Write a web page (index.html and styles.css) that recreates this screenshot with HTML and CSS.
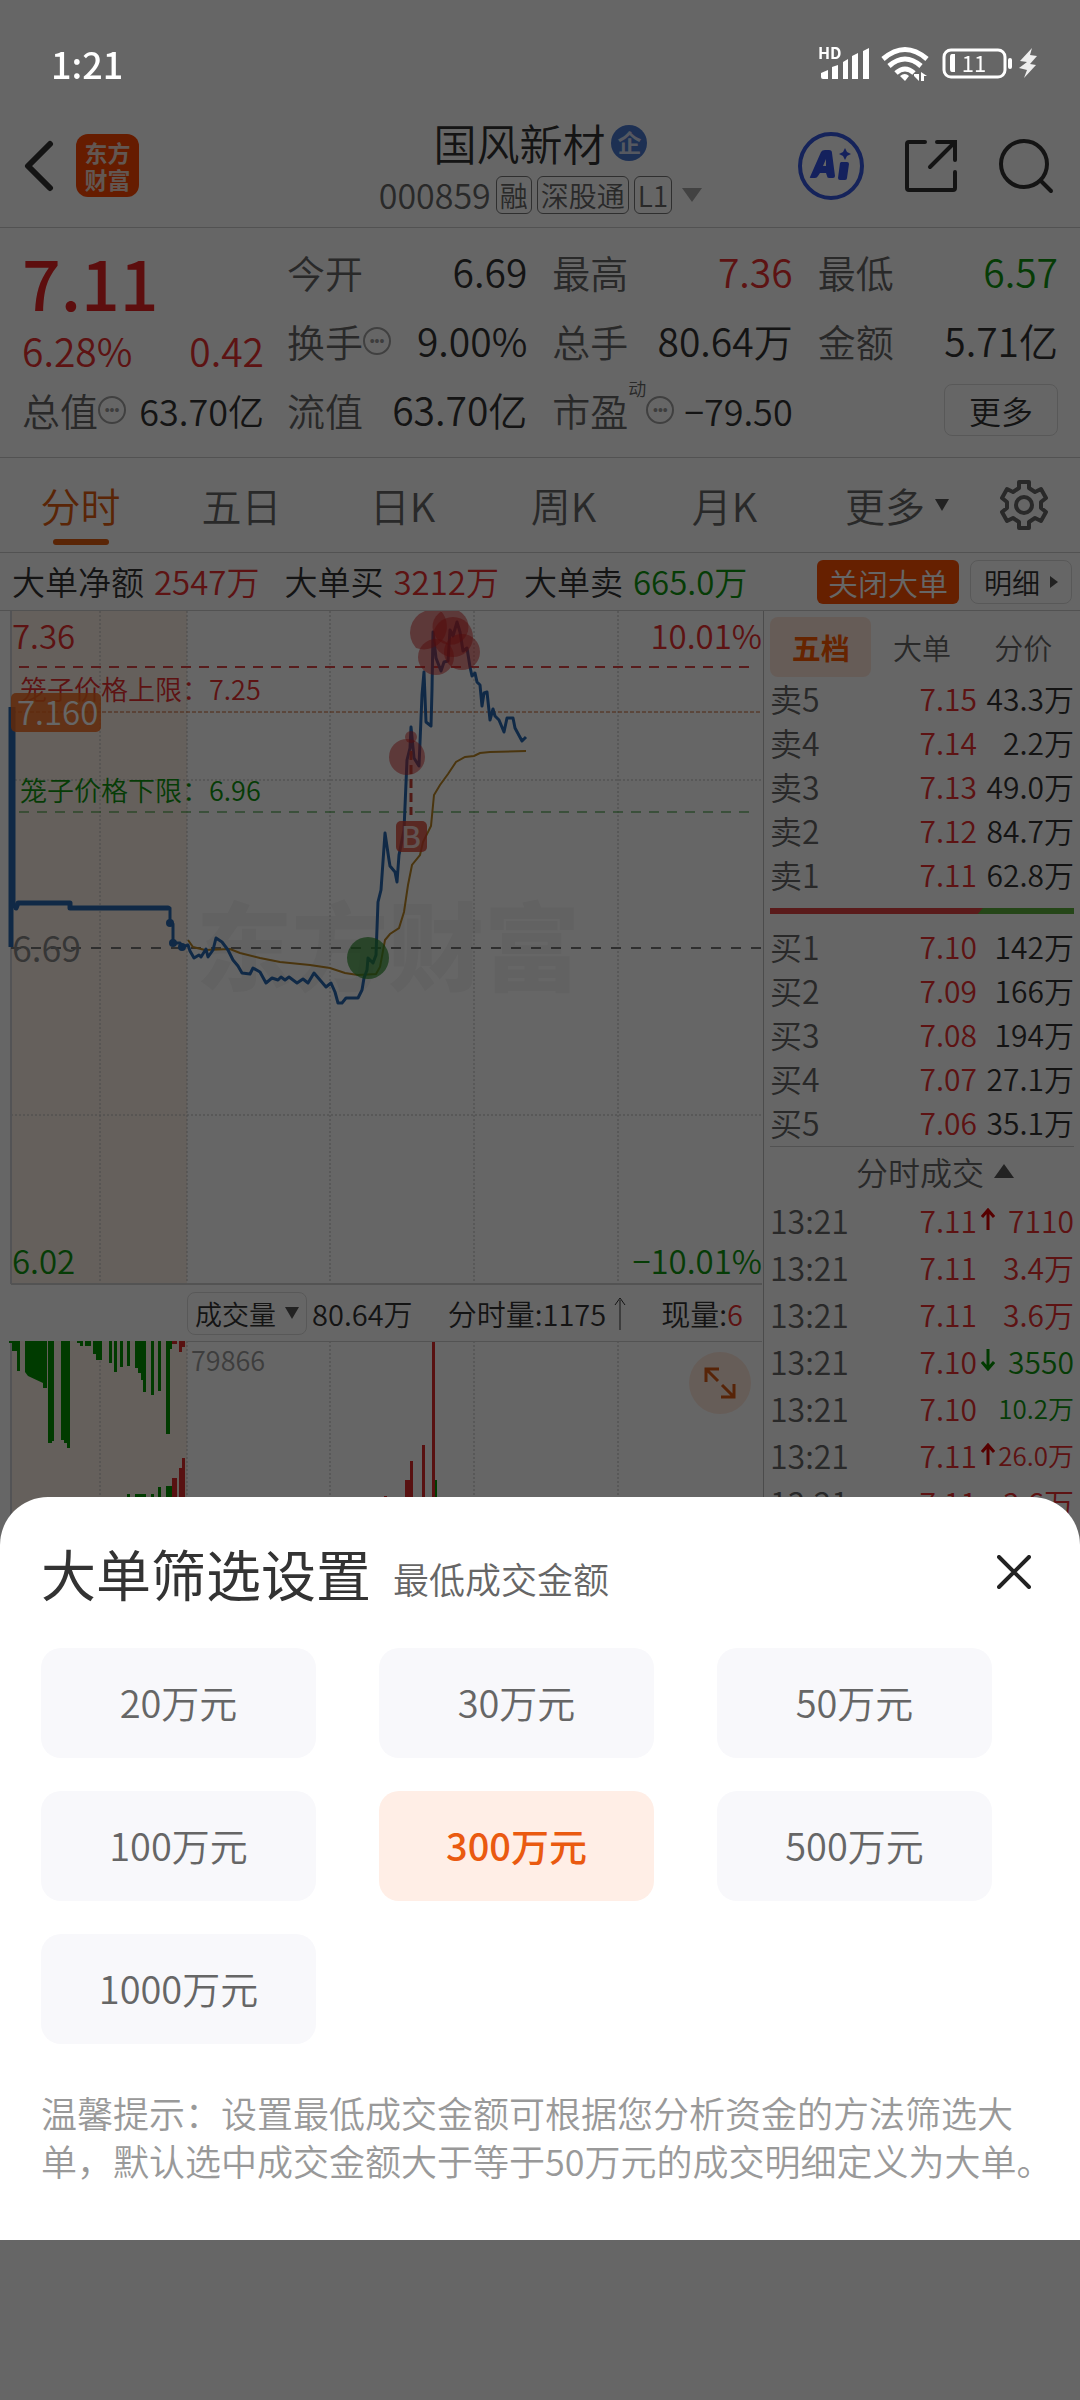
FILE: index.html
```html
<!DOCTYPE html>
<html lang="zh-CN">
  <head>
    <meta charset="utf-8">
    <meta name="viewport" content="width=device-width, initial-scale=1">
    <title>国风新材 000859</title>
    <link rel="stylesheet" href="styles.css">
  </head>
  <body>
    <div class="page">
      <header class="header">
        <div class="header-left">
          <button class="icon-btn" aria-label="返回">
            <svg width="32" height="52" viewBox="0 0 32 52"><path d="M28 4 L6 26 L28 48" class="ink" stroke-width="6" stroke-linecap="round" stroke-linejoin="round"/></svg>
          </button>
          <div class="logo"><span>东方</span><span>财富</span></div>
        </div>
        <div class="header-mid">
          <h1 class="stock-name">国风新材 <span class="badge">企</span></h1>
          <div class="stock-code">
            <span class="code">000859</span>
            <span class="tag">融</span>
            <span class="tag">深股通</span>
            <span class="tag">L1</span>
            <svg class="code-arrow" width="20" height="14" viewBox="0 0 20 14"><path d="M0 0 H20 L10 14Z" fill="#a6a6a6"/></svg>
          </div>
        </div>
        <div class="header-right">
          <button class="icon-btn" aria-label="AI">
            <svg width="66" height="68" viewBox="0 0 66 68">
              <ellipse cx="33" cy="34" rx="31" ry="32" fill="none" stroke="#3558e0" stroke-width="4"/>
              <path d="M12 45 L23 20 Q24 18 27 18 H31 Q34 18 34 21 L37 44 Q37 46 35 46 H31 Q29 46 29 44 L28 41 H22 L20 44 Q19 46 17 46 H13 Q11 46 12 45Z M25 34 H28 L28 27Z" fill="#3454e8" fill-rule="evenodd"/>
              <path d="M43 30 H49 Q51 30 51 32 L49 46 Q49 48 47 48 H42 Q40 48 40 46 L42 31Z M47 16 L49 20 L53 22 L49 24 L47 28 L45 24 L41 22 L45 20Z" fill="#3454e8"/>
            </svg>
          </button>
          <button class="icon-btn" aria-label="分享">
            <svg width="54" height="54" viewBox="0 0 54 54"><path d="M21 3 H5 Q3 3 3 5 V49 Q3 51 5 51 H49 Q51 51 51 49 V33 M33 3 H51 V21 M50 4 L26 28" class="ink" stroke-width="4" stroke-linecap="round"/></svg>
          </button>
          <button class="icon-btn" aria-label="搜索">
            <svg width="56" height="56" viewBox="0 0 56 56"><circle cx="26" cy="26" r="23" class="ink" stroke-width="4"/><path d="M43 43 L53 53" class="ink" stroke-width="4" stroke-linecap="round"/></svg>
          </button>
        </div>
      </header>

      <section class="quote">
        <div class="quote-price">
          <div class="price-now">7.11</div>
          <div class="quote-item up"><span>6.28%</span><span>0.42</span></div>
          <div class="quote-item small"><span class="label">总值<i class="more-dot">•••</i></span><span>63.70亿</span></div>
        </div>
        <div class="quote-grid">
          <div class="quote-item"><span class="label">今开</span><span>6.69</span></div>
          <div class="quote-item"><span class="label">最高</span><span class="up">7.36</span></div>
          <div class="quote-item"><span class="label">最低</span><span class="down">6.57</span></div>
          <div class="quote-item"><span class="label">换手<i class="more-dot">•••</i></span><span>9.00%</span></div>
          <div class="quote-item"><span class="label">总手</span><span>80.64万</span></div>
          <div class="quote-item"><span class="label">金额</span><span>5.71亿</span></div>
          <div class="quote-item"><span class="label">流值</span><span>63.70亿</span></div>
          <div class="quote-item small"><span class="label">市盈<sup>动</sup><i class="more-dot">•••</i></span><span>−79.50</span></div>
          <div class="quote-item"><button class="outline-btn quote-more">更多</button></div>
        </div>
      </section>

      <nav class="tabs">
        <button class="tab active">分时</button>
        <button class="tab">五日</button>
        <button class="tab">日K</button>
        <button class="tab">周K</button>
        <button class="tab">月K</button>
        <button class="tab">更多<svg width="14" height="12" viewBox="0 0 14 12"><path d="M0 0 H14 L7 12Z" fill="#555"/></svg></button>
        <button class="tab" aria-label="设置">
          <svg width="48" height="50" viewBox="0 0 48 50"><path d="M19 2 H29 V8 L35 12 L41 9 L46 18 L41 22 V28 L46 32 L41 41 L35 38 L29 42 V48 H19 V42 L13 38 L7 41 L2 32 L7 28 V22 L2 18 L7 9 L13 12 L19 8Z" fill="none" stroke="#666" stroke-width="4" stroke-linejoin="round"/><circle cx="24" cy="25" r="8" fill="none" stroke="#666" stroke-width="4"/></svg>
        </button>
      </nav>

      <div class="big-order">
        <div class="order-sum">大单净额 <span class="up">2547万</span></div>
        <div class="order-sum">大单买 <span class="up">3212万</span></div>
        <div class="order-sum">大单卖 <span class="down">665.0万</span></div>
        <button class="close-order">关闭大单</button>
        <button class="outline-btn detail-btn">明细<svg width="8" height="12" viewBox="0 0 8 12"><path d="M0 0 L8 6 L0 12Z" fill="#555"/></svg></button>
      </div>

      <main class="main">
        <div class="charts">
          <svg class="chart" viewBox="0 611 763 674">
            <rect x="11" y="611" width="176" height="673" fill="#fdf0e6"/>
            <text x="196" y="983" class="watermark">东方财富</text>
            <path d="M100 611V1284 M187 611V1284 M330 611V1284 M474 611V1284 M618 611V1284 M11 780H762 M11 1115H762" class="grid"/>
            <path d="M11 611V1284" stroke="#d0d0d4" stroke-width="2"/>
            <path d="M11 1284H762" stroke="#d0d0d0" stroke-width="2"/>
            <path d="M11 948H762" stroke="#777" stroke-width="2" stroke-dasharray="10 10"/>
            <path d="M19 667H749" stroke="#dc4848" stroke-width="2" stroke-dasharray="10 8"/>
            <path d="M12 712H762" stroke="#c8622c" stroke-width="1" stroke-dasharray="4 2"/>
            <path d="M19 812H749" stroke="#2a932a" stroke-width="1" stroke-dasharray="10 8"/>
            <text x="12" y="649" class="price-label up">7.36</text>
            <text x="762" y="649" class="price-label end up">10.01%</text>
            <text x="20" y="700" class="cage up">笼子价格上限：7.25</text>
            <text x="20" y="801" class="cage down">笼子价格下限：6.96</text>
            <text x="12" y="1274" class="price-label down">6.02</text>
            <text x="762" y="1274" class="price-label end down">−10.01%</text>
            <path d="M188 940 L193 947 205 950 230 949 240 953 260 958 280 962 310 965 330 968 345 973 358 975 376 974 380 967 385 940 390 934 399 928 404 912 408 885 412 865 420 855 423 842 431 826 434 795 440 785 448 774 456 762 465 757 474 756 480 753 490 752 526 751" fill="none" stroke="#b98424" stroke-width="2"/>
            <path d="M11 707V947 M13 707V908" class="line thick"/>
            <path d="M16 908 L18 903 H70 V908 H168" class="line thick" stroke-linecap="round"/>
            <path d="M168 908 L170 908 170 923 173 924 173 943 180 943 182 947 188 945 190 951 194 958 199 955 201 957 206 949 208 957 213 950 216 938 222 942 228 950 233 960 238 966 242 973 250 974 253 968 260 972 266 983 272 978 278 980 281 977 285 980 289 977 297 983 303 979 308 983 314 973 320 980 326 987 331 983 335 992 338 1003 342 1003 346 998 358 998 362 990 364 978 367 970 368 958 373 963 376 955 378 902 381 890 385 833 389 860 390 866 395 872 397 882 399 855 404 830 407 760 410 748 411 727 414 758 419 766 422 695 424 672 426 722 431 726 432 690 433 632 436 658 441 671 444 662 448 661 450 630 453 636 457 622 460 632 463 651 467 648 470 667 472 676 475 673 477 682 480 685 482 706 484 693 487 692 490 720 493 709 495 716 499 720 504 732 507 718 513 718 515 728 522 741 526 737" class="line"/>
            <g fill="#2868b0"><circle cx="170" cy="923" r="4"/><circle cx="173" cy="943" r="4"/><circle cx="182" cy="947" r="4"/></g>
            <circle cx="368" cy="958" r="21" fill="#2a8c2a" fill-opacity=".7"/>
            <g fill="#d22020" fill-opacity=".5">
              <path d="M416 648A23 23 0 0 1 425 611 H441 A23 23 0 0 1 416 648Z"/>
              <path d="M442 611H459 A18 18 0 1 1 442 611Z"/>
              <circle cx="453" cy="637" r="20"/>
              <circle cx="436" cy="657" r="18"/>
              <circle cx="462" cy="652" r="18"/>
              <circle cx="407" cy="757" r="18"/>
              <circle cx="411" cy="737" r="6"/>
            </g>
            <path d="M411 751V815" stroke="#c84238" stroke-width="3" stroke-dasharray="9 5"/>
            <rect x="396" y="821" width="31" height="31" rx="5" fill="#d8402f" fill-opacity=".8"/>
            <text x="411" y="848" class="buy-mark">B</text>
            <rect x="11" y="693" width="90" height="39" rx="5" fill="#f2691c" fill-opacity=".85"/>
            <text x="17" y="725" class="price-label tag-text">7.160</text>
            <text x="12" y="962" class="price-label mid">6.69</text>
          </svg>

          <div class="volume-head">
            <button class="outline-btn volume-type">成交量<svg width="14" height="12" viewBox="0 0 14 12"><path d="M0 0 H14 L7 12Z" fill="#555"/></svg></button>
            <span>80.64万</span>
            <span class="volume-min">分时量:1175<svg width="12" height="34" viewBox="0 0 12 34"><path d="M6 34V4 M1 9 L6 2 L11 9" fill="none" stroke="#333" stroke-width="1"/></svg></span>
            <span>现量:<span class="up">6</span></span>
          </div>

          <div class="volume">
            <svg class="chart" viewBox="0 1341 763 190">
              <rect x="11" y="1341" width="176" height="190" fill="#fdf0e6"/>
              <path d="M100 1341V1531 M187 1341V1531 M330 1341V1531 M474 1341V1531 M618 1341V1531" class="grid"/>
              <path d="M11 1341V1531" stroke="#d0d0d4" stroke-width="2"/>
              <path d="M187 1341H762" stroke="#d0d0d0" stroke-width="2"/>
              <g fill="#009400">
                <path d="M9 1341H20V1371H17V1351H12V1343H9Z M25 1341H47V1388H43V1383L28 1376 25 1372Z"/>
                <path d="M48 1341H54V1441H52V1443H48Z M61 1341H70V1448H67V1443H64V1440H61Z"/>
                <path d="M77 1341H83V1346H80V1343H77Z M85 1341H91V1346H85Z M93 1341H102V1360H96V1354H93Z"/>
                <path d="M109 1341H112V1363H109Z M114 1341H117V1372H114Z M120 1341H123V1367H120Z M127 1341H130V1366H127Z"/>
                <path d="M135 1341H146V1392H143V1380H141V1373H138V1368H135Z M151 1341H154V1395H151Z M158 1341H161V1391H158Z M166 1341H172V1349H170V1434H166Z"/>
                <path d="M127 1494H130V1531H127Z M135 1494H146V1531H135Z M151 1494H154V1531H151Z M158 1487H161V1531H158Z M166 1486H172V1531H166Z M435 1480H437V1531H435Z"/>
              </g>
              <g fill="#dc2c2c">
                <path d="M172 1341H177V1344H172Z M179 1341H185V1347H182V1352H179Z"/>
                <path d="M172 1478H177V1531H172Z M179 1468H182V1458H185V1531H179Z"/>
                <path d="M405 1480H410V1461H413V1531H405Z M422 1445H425V1531H422Z M432 1342H435V1531H432Z M384 1496H387V1531H384Z"/>
              </g>
              <text x="191" y="1371" class="volume-max">79866</text>
            </svg>
            <button class="expand" aria-label="全屏">
              <svg width="34" height="34" viewBox="0 0 34 34"><path d="M3 16V3H16 M3 3L15 15 M31 18V31H18 M31 31L19 19" fill="none" stroke="#d95b16" stroke-width="3"/></svg>
            </button>
          </div>
        </div>

        <aside class="side">
          <div class="side-tabs">
            <button class="side-tab active">五档</button>
            <button class="side-tab">大单</button>
            <button class="side-tab">分价</button>
          </div>
          <table class="book">
            <tr><th>卖5</th><td class="up">7.15</td><td>43.3万</td></tr>
            <tr><th>卖4</th><td class="up">7.14</td><td>2.2万</td></tr>
            <tr><th>卖3</th><td class="up">7.13</td><td>49.0万</td></tr>
            <tr><th>卖2</th><td class="up">7.12</td><td>84.7万</td></tr>
            <tr><th>卖1</th><td class="up">7.11</td><td>62.8万</td></tr>
          </table>
          <div class="ratio"><div class="ratio-buy" style="width: 70%"></div></div>
          <table class="book">
            <tr><th>买1</th><td class="up">7.10</td><td>142万</td></tr>
            <tr><th>买2</th><td class="up">7.09</td><td>166万</td></tr>
            <tr><th>买3</th><td class="up">7.08</td><td>194万</td></tr>
            <tr><th>买4</th><td class="up">7.07</td><td>27.1万</td></tr>
            <tr><th>买5</th><td class="up">7.06</td><td>35.1万</td></tr>
          </table>
          <button class="deals-title">分时成交<svg width="20" height="14" viewBox="0 0 20 14"><path d="M0 14 H20 L10 0Z" fill="#555"/></svg></button>
          <table class="book deals">
            <tr><th>13:21</th><td class="up">7.11<svg class="arrow" viewBox="0 0 14 22"><path d="M7 22V3 M1 9L7 2L13 9"/></svg></td><td class="up">7110</td></tr>
            <tr><th>13:21</th><td class="up">7.11</td><td class="up">3.4万</td></tr>
            <tr><th>13:21</th><td class="up">7.11</td><td class="up">3.6万</td></tr>
            <tr><th>13:21</th><td class="up">7.10<svg class="arrow fall" viewBox="0 0 14 22"><path d="M7 0V19 M1 13L7 20L13 13"/></svg></td><td class="down">3550</td></tr>
            <tr><th>13:21</th><td class="up">7.10</td><td class="down long">10.2万</td></tr>
            <tr><th>13:21</th><td class="up">7.11<svg class="arrow" viewBox="0 0 14 22"><path d="M7 22V3 M1 9L7 2L13 9"/></svg></td><td class="up long">26.0万</td></tr>
            <tr><th>13:21</th><td class="up">7.11</td><td class="up">3.6万</td></tr>
          </table>
        </aside>
      </main>
    </div>

    <div class="mask">
      <section class="sheet" role="dialog" aria-labelledby="sheet-title">
        <div class="sheet-head">
          <h2 id="sheet-title">大单筛选设置</h2>
          <span class="sheet-sub">最低成交金额</span>
          <button class="sheet-close" aria-label="关闭">
            <svg width="34" height="34" viewBox="0 0 34 34"><path d="M2 2L32 32M32 2L2 32" fill="none" stroke="#222" stroke-width="4" stroke-linecap="round"/></svg>
          </button>
        </div>
        <div class="options">
          <button class="option">20万元</button>
          <button class="option">30万元</button>
          <button class="option">50万元</button>
          <button class="option">100万元</button>
          <button class="option selected">300万元</button>
          <button class="option">500万元</button>
          <button class="option">1000万元</button>
        </div>
        <p class="hint">温馨提示：设置最低成交金额可根据您分析资金的方法筛选大单，默认选中成交金额大于等于50万元的成交明细定义为大单。</p>
      </section>
    </div>

    <div class="status-bar">
      <span class="time">1:21</span>
      <svg width="224" height="44" viewBox="814 42 224 44" fill="#fff">
        <text x="818" y="60" class="hd">HD</text>
        <path d="M821 74L828 71V80H823Q821 80 821 78Z M832 68L838 66V80H832Z M843 63L848 60V80H843Z M852 57L858 54V80H852Z M863 52L869 49V80H863Z"/>
        <g fill="none" stroke="#fff" stroke-width="5">
          <path d="M883 60Q905 41 927 60"/>
          <path d="M889 67Q905 53 921 67"/>
          <path d="M896 74Q905 66 914 74"/>
        </g>
        <path d="M900 77Q905 73 909 77L905 82Z"/>
        <path d="M914 75H919V82L914 77Z M921 73L927 77H924V82H921Z"/>
        <rect x="944" y="51" width="61" height="27" rx="7" fill="none" stroke="#fff" stroke-width="3"/>
        <path d="M952 55H955V73H952Q950 73 950 70V58Q950 55 952 55Z"/>
        <rect x="1008" y="59" width="4" height="11" rx="2"/>
        <text x="974" y="73" class="battery">11</text>
        <path d="M1032 49L1020 62L1027 63L1019 69L1027 71L1024 79L1036 66L1030 65L1037 57L1030 56Z" fill="#eee"/>
      </svg>
    </div>
  </body>
</html>
```

FILE: styles.css
```css
* {
  box-sizing: border-box;
}
body {
  margin: 0;
  height: 100vh;
  overflow: hidden;
  background: #fff;
  color: #333;
  font-family: "Noto Sans CJK SC", "Noto Sans", sans-serif;
  font-weight: 350;
  line-height: 1;
}
button {
  margin: 0;
  padding: 0;
  border: 0;
  background: none;
  color: inherit;
  font: inherit;
}
svg {
  display: block;
}
.up {
  color: #e83030;
  fill: #e83030;
}
.down {
  color: #0f960f;
  fill: #0f960f;
}
.ink {
  fill: none;
  stroke: #333;
}

/* status bar */
.status-bar {
  position: fixed;
  top: 0;
  left: 0;
  right: 0;
  height: 128px;
  padding: 0 42px 2px 51px;
  display: flex;
  align-items: center;
  justify-content: space-between;
  color: #fff;
}
.time {
  font-size: 36px;
  font-weight: 500;
}
.hd {
  font-size: 16px;
  font-weight: 700;
}
.battery {
  font-size: 22px;
  font-weight: 400;
  text-anchor: middle;
}

/* header */
.header {
  margin-top: 104px;
  height: 124px;
  padding: 0 26px 0 22px;
  display: grid;
  grid-template-columns: 1fr auto 1fr;
  align-items: center;
  border-bottom: 1px solid #ccc;
}
.header-left, .header-right {
  display: flex;
  align-items: center;
}
.header-left {
  gap: 22px;
}
.header-right {
  justify-content: flex-end;
  gap: 40px;
}
.logo {
  width: 63px;
  height: 63px;
  border-radius: 12px;
  background: #ff4600;
  color: #f4d9cd;
  display: flex;
  flex-direction: column;
  align-items: center;
  justify-content: center;
  gap: 4px;
  font-size: 23px;
  font-weight: 700;
}
.header-mid {
  padding-top: 4px;
  padding-left: 5px;
  display: flex;
  flex-direction: column;
  align-items: center;
  gap: 12px;
}
.stock-name {
  margin: 0;
  display: flex;
  align-items: center;
  gap: 6px;
  font-size: 43px;
  font-weight: 350;
}
.badge {
  width: 36px;
  height: 36px;
  border-radius: 50%;
  background: #4a78d0;
  color: #d5dcf0;
  font-size: 24px;
  font-weight: 700;
  line-height: 34px;
  text-align: center;
}
.stock-code {
  display: flex;
  align-items: center;
  gap: 5px;
  color: #666;
}
.code {
  font-size: 34px;
}
.tag {
  height: 38px;
  padding: 0 3px;
  border: 1px solid #777;
  border-radius: 6px;
  font-size: 28px;
  line-height: 36px;
}
.code-arrow {
  margin-left: 5px;
}

/* quote */
.quote {
  height: 230px;
  padding: 9px 22px 13px 22px;
  display: grid;
  grid-template-columns: 242fr 771fr;
  gap: 23px;
  border-bottom: 1px solid #ccc;
}
.quote-grid {
  display: grid;
  grid-template-columns: repeat(3, 1fr);
  grid-auto-rows: 69px;
  column-gap: 25px;
}
.quote-price {
  display: grid;
  grid-template-rows: 89px 49px 69px;
}
.price-now {
  align-self: center;
  color: #e92525;
  font-size: 68px;
  font-weight: 500;
}
.quote-item {
  display: flex;
  align-items: center;
  justify-content: space-between;
  font-size: 39px;
  white-space: nowrap;
}
.quote-item.small {
  font-size: 36px;
}
.label {
  display: flex;
  align-items: center;
  color: #666;
  font-size: 38px;
}
.label sup {
  align-self: flex-start;
  margin-top: -12px;
  font-size: 18px;
}
.more-dot {
  width: 28px;
  height: 28px;
  border: 2px solid #a0a0a0;
  border-radius: 50%;
  color: #999;
  font-family: "Liberation Sans", sans-serif;
  font-size: 14px;
  font-style: normal;
  line-height: 24px;
  display: flex;
  justify-content: center;
}
.outline-btn {
  border: 1px solid #ddd;
  border-radius: 8px;
}
.quote-more {
  margin-left: auto;
  width: 114px;
  height: 52px;
  font-size: 32px;
}

/* tabs */
.tabs {
  height: 95px;
  padding-right: 22px;
  display: grid;
  grid-template-columns: repeat(5, 161fr) 184fr 69fr;
  border-bottom: 1px solid #ccc;
}
.tab {
  position: relative;
  display: flex;
  align-items: center;
  justify-content: center;
  gap: 10px;
  color: #666;
  font-size: 40px;
}
.tab.active {
  color: #e05c10;
}
.tab.active::after {
  content: "";
  position: absolute;
  bottom: 7px;
  width: 56px;
  height: 6px;
  border-radius: 3px;
  background: #e05c10;
}

/* big orders */
.big-order {
  height: 58px;
  padding: 0 8px 0 12px;
  display: flex;
  align-items: center;
  border-bottom: 1px solid #ccc;
  font-size: 33px;
  white-space: nowrap;
}
.order-sum {
  display: flex;
  gap: 10px;
  margin-right: 25px;
}
.close-order {
  margin-left: auto;
  margin-right: 11px;
  width: 142px;
  height: 44px;
  border-radius: 6px;
  background: #ff5000;
  color: #fff;
  font-size: 30px;
}
.detail-btn {
  width: 102px;
  height: 44px;
  display: flex;
  align-items: center;
  justify-content: center;
  gap: 10px;
  font-size: 28px;
}

/* charts */
.main {
  display: grid;
  grid-template-columns: 763fr 317fr;
}
.charts {
  min-width: 0;
}
.chart {
  width: 100%;
  height: auto;
}
.grid {
  fill: none;
  stroke: #b8b8b8;
  stroke-width: 1;
  stroke-dasharray: 2 2;
}
.line {
  fill: none;
  stroke: #2868b0;
  stroke-width: 3;
  stroke-linejoin: round;
}
.line.thick {
  stroke-width: 5;
}
.watermark {
  font-size: 96px;
  font-weight: 900;
  fill: #f5f5f5;
}
.price-label {
  font-size: 33px;
}
.end {
  text-anchor: end;
}
.mid {
  fill: #888;
  font-size: 36px;
}
.tag-text {
  fill: #fff;
}
.cage {
  font-size: 27px;
}
.buy-mark {
  fill: #f4d4d0;
  font-size: 30px;
  font-weight: 500;
  text-anchor: middle;
}
.volume-head {
  height: 56px;
  padding-left: 187px;
  padding-right: 20px;
  display: flex;
  align-items: center;
  justify-content: space-between;
  font-size: 29px;
  white-space: nowrap;
}
.volume-type {
  width: 120px;
  height: 43px;
  margin-right: -30px;
  display: flex;
  align-items: center;
  justify-content: center;
  gap: 9px;
  font-size: 27px;
}
.volume-min {
  display: flex;
  align-items: center;
  gap: 8px;
}
.volume {
  position: relative;
}
.volume-max {
  fill: #999;
  font-size: 27px;
}
.expand {
  position: absolute;
  top: 11px;
  right: 12px;
  width: 62px;
  height: 62px;
  border-radius: 50%;
  background: #ffe8dc;
  display: flex;
  align-items: center;
  justify-content: center;
}

/* order book */
.side {
  padding: 6px 6px 0;
  border-left: 1px solid #bbb;
}
.side-tabs {
  height: 61px;
  display: grid;
  grid-template-columns: repeat(3, 1fr);
}
.side-tab {
  height: 60px;
  border-radius: 8px;
  color: #666;
  font-size: 29px;
}
.side-tab.active {
  background: #ffe6da;
  color: #ff5a00;
  font-weight: 700;
}
.book {
  width: 100%;
  border-collapse: collapse;
  table-layout: fixed;
  font-size: 30px;
}
.book tr {
  height: 44px;
}
.book th, .book td {
  padding: 0 0 4px;
  font-weight: 350;
  text-align: right;
  white-space: nowrap;
}
.book th {
  width: 110px;
  color: #666;
  font-size: 32px;
  text-align: left;
}
.book td:last-child {
  width: 97px;
}
.ratio {
  height: 6px;
  margin: 10px 0 12px;
  background: #5cb03c;
}
.ratio-buy {
  height: 100%;
  background: #e04444;
  clip-path: polygon(0 0, 100% 0, calc(100% - 5px) 100%, 0 100%);
}
.deals-title {
  width: 100%;
  height: 52px;
  border-top: 1px solid #ccc;
  padding-left: 26px;
  padding-bottom: 3px;
  display: flex;
  align-items: center;
  justify-content: center;
  gap: 10px;
  color: #666;
  font-size: 32px;
}
.deals tr {
  height: 47px;
}
.deals td {
  position: relative;
}
.book.deals td.long {
  font-size: 26px;
}
.arrow {
  position: absolute;
  top: 10px;
  right: -18px;
  width: 14px;
  height: 22px;
  fill: none;
  stroke: #d80000;
  stroke-width: 3;
}
.arrow.fall {
  stroke: #009400;
}

/* bottom sheet */
.mask {
  position: fixed;
  top: 0;
  left: 0;
  right: 0;
  bottom: 0;
  padding-bottom: 160px;
  display: flex;
  flex-direction: column;
  justify-content: flex-end;
  background: rgba(0, 0, 0, .6);
}
.sheet {
  padding: 43px 25px 56px 41px;
  border-radius: 48px 48px 0 0;
  background: #fff;
}
.sheet-head {
  height: 64px;
  display: flex;
  align-items: center;
}
.sheet-head h2 {
  margin: 0;
  font-size: 55px;
  font-weight: 400;
}
.sheet-sub {
  margin-top: 12px;
  margin-left: 22px;
  color: #666;
  font-size: 36px;
}
.sheet-close {
  margin-left: auto;
  margin-right: 24px;
}
.options {
  margin-top: 44px;
  margin-right: 63px;
  display: grid;
  grid-template-columns: repeat(3, 1fr);
  gap: 33px 63px;
}
.option {
  height: 110px;
  padding-bottom: 3px;
  border-radius: 20px;
  background: #f8f8fb;
  color: #666;
  font-size: 38px;
}
.option.selected {
  background: #ffeee6;
  color: #ea5a10;
  font-weight: 500;
}
.hint {
  margin: 44px 0 0;
  color: #999;
  font-size: 36px;
  line-height: 48px;
}
```
